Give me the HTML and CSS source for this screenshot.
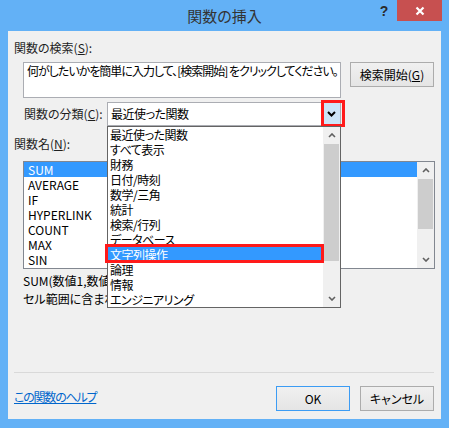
FILE: index.html
```html
<!DOCTYPE html>
<html lang="ja">
<head>
<meta charset="utf-8">
<title>関数の挿入</title>
<link rel="stylesheet" href="styles.css">
</head>
<body>
<div class="window">
  <div class="titlebar">
    <div class="title">関数の挿入</div>
    <div class="controls">
      <div class="help">?</div>
      <div class="close">
        <svg width="10" height="10" viewBox="0 0 10 10"><path d="M1.5 1.5 L8.5 8.5 M8.5 1.5 L1.5 8.5" stroke="#fff" stroke-width="2.2" fill="none"/></svg>
      </div>
    </div>
  </div>
  <div class="client">
    <div class="label">関数の検索(<u>S</u>):</div>
    <div class="search-row">
      <div class="textarea">何がしたいかを簡単に入力して、[検索開始] をクリックしてください。</div>
      <div class="btn search-btn">検索開始(<u>G</u>)</div>
    </div>
    <div class="cat-row">
      <div class="cat-label">関数の分類(<u>C</u>):</div>
      <div class="select">
        <span class="select-text">最近使った関数</span>
        <span class="select-btn">
          <svg width="9" height="6" viewBox="0 0 9 6"><path d="M1 1 L4.5 4.5 L8 1" stroke="#000" stroke-width="2" fill="none"/></svg>
        </span>
        <span class="mark mark-btn"></span>
        <div class="droplist">
          <div class="drop-items">
            <div class="ditem">最近使った関数</div>
            <div class="ditem">すべて表示</div>
            <div class="ditem">財務</div>
            <div class="ditem">日付/時刻</div>
            <div class="ditem">数学/三角</div>
            <div class="ditem">統計</div>
            <div class="ditem">検索/行列</div>
            <div class="ditem">データベース</div>
            <div class="ditem selected">文字列操作<span class="mark mark-item"></span></div>
            <div class="ditem">論理</div>
            <div class="ditem">情報</div>
            <div class="ditem">エンジニアリング</div>
          </div>
          <div class="sb">
            <div class="sb-btn"><svg width="8" height="5" viewBox="0 0 8 5"><path d="M1 4 L4 1 L7 4" stroke="#606060" stroke-width="1.6" fill="none"/></svg></div>
            <div class="thumb drop-thumb"></div>
            <div class="track"></div>
            <div class="sb-btn"><svg width="8" height="5" viewBox="0 0 8 5"><path d="M1 1 L4 4 L7 1" stroke="#606060" stroke-width="1.6" fill="none"/></svg></div>
          </div>
        </div>
      </div>
    </div>
    <div class="label name-label">関数名(<u>N</u>):</div>
    <div class="listbox">
      <div class="list-items">
        <div class="litem selected">SUM</div>
        <div class="litem">AVERAGE</div>
        <div class="litem">IF</div>
        <div class="litem">HYPERLINK</div>
        <div class="litem">COUNT</div>
        <div class="litem">MAX</div>
        <div class="litem">SIN</div>
      </div>
      <div class="sb">
        <div class="sb-btn"><svg width="8" height="5" viewBox="0 0 8 5"><path d="M1 4 L4 1 L7 4" stroke="#606060" stroke-width="1.6" fill="none"/></svg></div>
        <div class="thumb list-thumb"></div>
        <div class="track"></div>
        <div class="sb-btn"><svg width="8" height="5" viewBox="0 0 8 5"><path d="M1 1 L4 4 L7 1" stroke="#606060" stroke-width="1.6" fill="none"/></svg></div>
      </div>
    </div>
    <div class="desc">
      <div class="desc-line">SUM(数値1,数値2,...)</div>
      <div class="desc-line">セル範囲に含まれる数値をすべて合計します。</div>
    </div>
    <div class="footer">
      <div class="separator"></div>
      <div class="footer-row">
        <a class="help-link" href="#">この関数のヘルプ</a>
        <div class="buttons">
          <div class="btn ok">OK</div>
          <div class="btn cancel">キャンセル</div>
        </div>
      </div>
    </div>
  </div>
</div>
</body>
</html>
```

FILE: styles.css
```css
* { box-sizing: border-box; }
html, body { margin: 0; padding: 0; }
body {
  width: 449px;
  height: 428px;
  overflow: hidden;
  font-family: "Noto Sans CJK JP", "Noto Sans", sans-serif;
  font-size: 12px;
  color: #000;
  font-feature-settings: "palt";
}
u { text-decoration: underline; text-underline-offset: 1px; }

.window {
  width: 449px;
  height: 428px;
  background: #63b1f6;
  display: flex;
  flex-direction: column;
}
.titlebar {
  height: 31px;
  flex: none;
  display: grid;
  grid-template-columns: 1fr auto 1fr;
  padding: 0 7px;
}
.title {
  grid-column: 2;
  align-self: center;
  font-size: 15px;
  line-height: 20px;
  color: #333;
  margin-top: 1px;
}
.controls {
  grid-column: 3;
  justify-self: end;
  display: flex;
  align-items: flex-start;
}
.help {
  width: 26px;
  height: 21px;
  font-family: "Liberation Sans", sans-serif;
  font-weight: bold;
  font-size: 14px;
  line-height: 23px;
  text-align: center;
  color: #2b2b2b;
}
.close {
  width: 45px;
  height: 21px;
  background: #c75050;
  display: flex;
  align-items: center;
  justify-content: center;
}

.client {
  margin: 0 8px;
  height: 388px;
  background: #f0f0f0;
  padding: 9px 7px 0 6px;
  display: flex;
  flex-direction: column;
}
.label { line-height: 16px; color: #1e1e1e; }

.search-row {
  display: flex;
  align-items: flex-start;
  margin-top: 6px;
  padding-left: 9px;
}
.textarea {
  width: 318px;
  height: 36px;
  background: #fff;
  border: 1px solid #abadb3;
  padding: 0 1px 0 3px;
  line-height: 16px;
  white-space: nowrap;
  overflow: hidden;
  letter-spacing: -1px;
}
.btn {
  height: 25px;
  border: 1px solid #acacac;
  background: linear-gradient(#f0f0f0, #e5e5e5);
  display: flex;
  align-items: center;
  justify-content: center;
  line-height: 16px;
}
.search-btn { width: 84px; margin-left: 9px; }

.cat-row {
  display: flex;
  align-items: center;
  margin-top: 4px;
  padding-left: 10px;
}
.cat-label { width: 83px; line-height: 16px; color: #1e1e1e; }
.select {
  position: relative;
  width: 234px;
  height: 24px;
  background: #fff;
  border: 1px solid #abadb3;
  display: flex;
  align-items: stretch;
}
.select-text {
  flex: 1;
  padding-left: 3px;
  line-height: 22px;
  letter-spacing: -0.5px;
}
.select-btn {
  width: 18px;
  background: #cce4f7;
  border-left: 1px solid #7eb4ea;
  display: flex;
  align-items: center;
  justify-content: center;
}
.mark {
  position: absolute;
  border: 3px solid #ff1a1a;
  pointer-events: none;
}
.mark-btn {
  left: 213px;
  top: -3px;
  width: 24px;
  height: 27px;
}

.droplist {
  position: absolute;
  z-index: 10;
  left: -1px;
  top: 23px;
  width: 234px;
  height: 182px;
  background: #fff;
  border: 1px solid #646464;
  display: flex;
}
.drop-items { flex: 1; display: flex; flex-direction: column; }
.ditem {
  position: relative;
  height: 15px;
  line-height: 15px;
  padding-left: 2px;
  white-space: nowrap;
  letter-spacing: -0.5px;
}
.ditem.selected { background: #3399ff; color: #fff; }
.mark-item {
  left: -3px;
  top: -3px;
  right: -1px;
  bottom: -1px;
}

.sb {
  width: 17px;
  background: #f0f0f0;
  display: flex;
  flex-direction: column;
}
.sb-btn {
  height: 17px;
  flex: none;
  display: flex;
  align-items: center;
  justify-content: center;
}
.thumb { background: #cdcdcd; margin: 0 1px; flex: none; }
.drop-thumb { height: 117px; }
.list-thumb { height: 50px; }
.track { flex: 1; }

.name-label { margin-top: 10px; }
.listbox {
  margin-top: 9px;
  margin-left: 9px;
  width: 412px;
  height: 108px;
  background: #fff;
  border: 1px solid #828790;
  display: flex;
}
.list-items { flex: 1; }
.litem {
  height: 15px;
  line-height: 15px;
  padding-left: 4px;
}
.litem.selected { background: #3399ff; color: #fff; }

.desc { margin-top: 3px; margin-left: 9px; width: 84px; overflow: hidden; }
.desc-line { line-height: 18px; white-space: nowrap; }

.footer { margin-top: auto; }
.separator { height: 1px; background: #d9d9d9; }
.footer-row {
  display: flex;
  align-items: center;
  justify-content: space-between;
  padding: 13px 0 8px;
}
.help-link {
  color: #0066cc;
  text-decoration: underline;
  line-height: 16px;
  margin-bottom: 4px;
  letter-spacing: -1.2px;
}
.buttons { display: flex; gap: 10px; }
.ok, .cancel { width: 74px; }
.ok { border-color: #3c9cf4; }
```
